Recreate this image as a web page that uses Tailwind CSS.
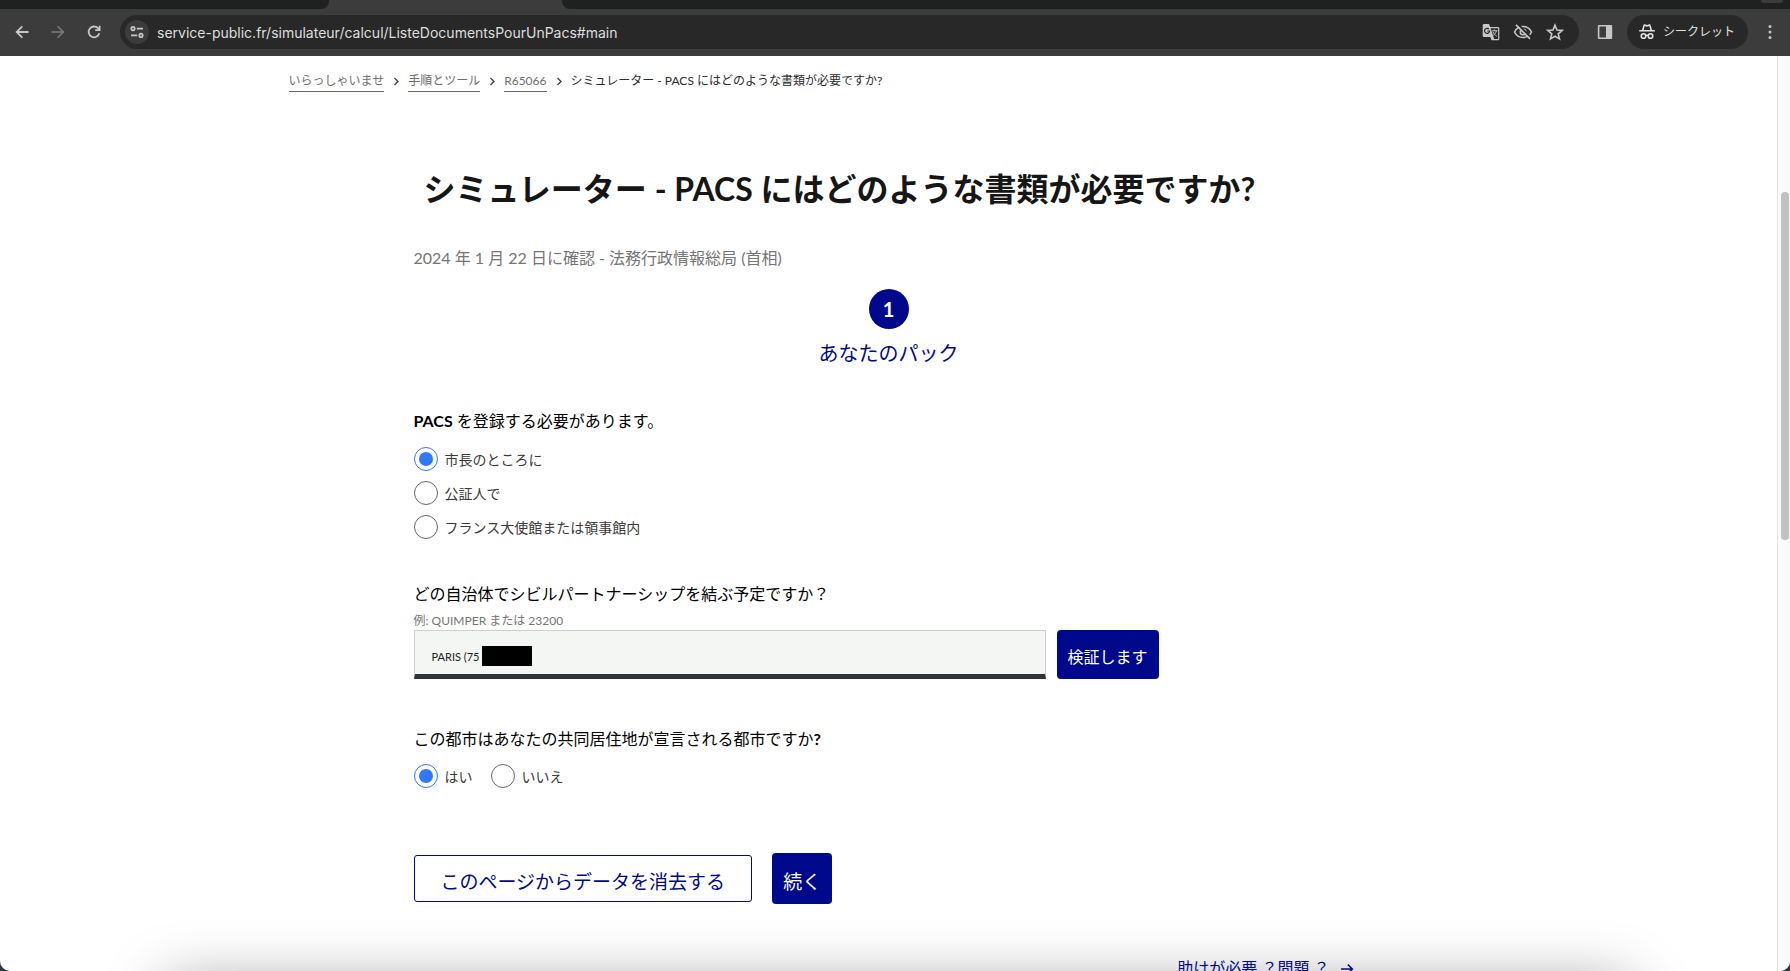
<!DOCTYPE html>
<html lang="ja">
<head>
<meta charset="utf-8">
<title>シミュレーター - PACS にはどのような書類が必要ですか?</title>
<script src="https://cdn.jsdelivr.net/npm/@tailwindcss/browser@4"></script>
</head>
<body class="h-screen overflow-hidden bg-[#2c3b42] font-['Lato','Noto_Sans_CJK_JP',sans-serif] text-black">
<div class="relative flex h-full flex-col overflow-hidden rounded-b-[10px] bg-white">

  <!-- Browser chrome -->
  <header class="shrink-0 bg-[#3c3c3c] font-['Inter','Noto_Sans_CJK_JP',sans-serif]">
    <div class="flex h-[9px] bg-[#3c3c3c]">
      <div class="w-[329px] rounded-br-[8px] bg-[#1f2120]"></div>
      <div class="w-[233px]"></div>
      <div class="flex flex-1 justify-end rounded-bl-[8px] bg-[#1f2120] pr-[7px]">
        <div class="h-[3px] w-[22px] rounded-b-full bg-[#3c3c3c]"></div>
      </div>
    </div>
    <div class="flex h-[47px] items-center pb-px text-[#c7c7c7]">
      <button type="button" aria-label="戻る" class="ml-3 flex size-5 items-center justify-center">
        <svg class="size-5" viewBox="0 0 20 20" fill="none" stroke="currentColor" stroke-width="1.8"><path d="M16.5 10H4.8M10.3 4.3 4.6 10l5.7 5.7"/></svg>
      </button>
      <button type="button" aria-label="進む" class="ml-4 flex size-5 items-center justify-center text-[#7d7d7d]">
        <svg class="size-5" viewBox="0 0 20 20" fill="none" stroke="currentColor" stroke-width="1.6"><path d="M3.5 10h11.7M9.7 4.3l5.7 5.7-5.7 5.7"/></svg>
      </button>
      <button type="button" aria-label="再読み込み" class="ml-4 flex size-5 items-center justify-center">
        <svg class="size-5" viewBox="0 0 20 20" fill="none" stroke="currentColor" stroke-width="1.8"><path d="M15.3 11.2A5.4 5.4 0 1 1 14 6.2l1.4 1.5"/><path d="M15.6 3.8v4.4h-4.4"/></svg>
      </button>
      <div class="ml-4 flex h-[34px] flex-1 items-center rounded-full bg-[#282828] pr-[14px]">
        <button type="button" aria-label="サイト情報" class="ml-[5px] flex size-6 items-center justify-center rounded-full bg-[#3c3c3c]">
          <svg class="size-4" viewBox="0 0 16 16" fill="none" stroke="currentColor" stroke-width="1.7"><circle cx="4" cy="4.6" r="1.7"/><path d="M7.8 4.6H14M2 11.4h6.2"/><circle cx="12" cy="11.4" r="1.7"/></svg>
        </button>
        <input aria-label="アドレス" value="service-public.fr/simulateur/calcul/ListeDocumentsPourUnPacs#main" class="ml-2 h-6 min-w-0 flex-1 bg-transparent text-[14px] text-[#dedede] outline-none">
        <button type="button" aria-label="翻訳" class="flex size-5 items-center justify-center">
          <svg class="size-5" viewBox="0 0 20 20"><path fill="currentColor" fill-rule="evenodd" d="M3 2h5l1.2 3H17a1.3 1.3 0 0 1 1.3 1.300V17a1.300 1.300 0 0 1-1.300 1.300h-6.500L9.300 15H3a1.300 1.300 0 0 1-1.300-1.300V3.300A1.300 1.300 0 0 1 3 2zM9.600 6.200l3.600 10.900h3.900V6.200z"/><path fill="none" stroke="#282828" stroke-width="1.2" d="M8 7.200A2.500 2.500 0 1 0 8.600 9H6.300"/><path fill="none" stroke="currentColor" stroke-width="1" d="M11 8.800h5.500M13.600 7.500v1.300M15.400 8.800c-.5 2-1.600 3.600-3.200 4.600M12 9.800c.8 1.900 2 3.200 3.800 4.400"/></svg>
        </button>
        <button type="button" aria-label="トラッキング防止" class="ml-3 flex size-5 items-center justify-center">
          <svg class="size-5" viewBox="0 0 20 20" fill="none" stroke="currentColor" stroke-width="1.600"><path d="M1.500 10C3.200 6.600 6.400 4.500 10 4.500s6.800 2.100 8.500 5.500c-1.700 3.400-4.900 5.500-8.500 5.500S3.200 13.400 1.500 10z"/><circle cx="10" cy="10" r="2.700"/><path stroke="#282828" stroke-width="2" d="M4.300 1.800 18 15.500"/><path d="M3 2.900l14 14"/></svg>
        </button>
        <button type="button" aria-label="ブックマーク" class="ml-3 flex size-5 items-center justify-center">
          <svg class="size-5" viewBox="0 0 20 20" fill="none" stroke="currentColor" stroke-width="1.600"><path d="m10 3.200 2 4.800 5.200.4-4 3.400 1.300 5.100L10 14.200l-4.500 2.700 1.300-5.100-4-3.400L8 8z"/></svg>
        </button>
      </div>
      <button type="button" aria-label="サイドパネル" class="ml-4 flex size-5 items-center justify-center">
        <svg class="size-4" viewBox="0 0 16 16"><path fill="currentColor" fill-rule="evenodd" d="M2 1h12a1.200 1.200 0 0 1 1.200 1.200v11.600A1.200 1.200 0 0 1 14 15H2a1.200 1.200 0 0 1-1.200-1.200V2.200A1.200 1.200 0 0 1 2 1zm.4 1.600v10.800H9V2.600z"/></svg>
      </button>
      <button type="button" class="ml-3 flex h-[34px] items-center gap-2 rounded-full bg-[#282828] pr-[13px] pl-3 text-[12px] text-[#e3e3e3]">
        <svg class="size-4" viewBox="0 0 16 16"><path fill="currentColor" fill-rule="evenodd" d="M4.500.8C4.700.3 5.200.1 5.600.3L8 1.100 10.400.3c.4-.2.9 0 1.100.5L13 6h2.800v1.600H.2V6H3zM5.700 2 4.700 6h6.600l-1-4L8 2.700z"/><g fill="none" stroke="currentColor" stroke-width="1.600"><circle cx="4.500" cy="12" r="2.300"/><circle cx="11.500" cy="12" r="2.300"/><path d="M6.800 11.700c.7-.5 1.700-.5 2.400 0"/></g></svg>
        <span>シークレット</span>
      </button>
      <button type="button" aria-label="メニュー" class="mr-[10px] ml-3 flex size-5 items-center justify-center">
        <svg class="size-5" viewBox="0 0 20 20" fill="currentColor"><circle cx="10" cy="4.500" r="1.500"/><circle cx="10" cy="10" r="1.500"/><circle cx="10" cy="15.500" r="1.500"/></svg>
      </button>
    </div>
  </header>

  <div class="flex min-h-0 flex-1">
    <div class="min-w-0 flex-1 overflow-hidden">
      <div class="mx-auto max-w-[1200px] pt-[15px]">
        <nav aria-label="パンくず" class="flex items-center text-[12px] leading-5 text-[#6e6e6e]">
          <a href="#" class="border-b border-[#666]">いらっしゃいませ</a>
          <svg class="mx-1 size-4" viewBox="0 0 16 16" fill="none" stroke="#444" stroke-width="1.400"><path d="m6.500 4 3.500 3.500L6.500 11"/></svg>
          <a href="#" class="border-b border-[#666]">手順とツール</a>
          <svg class="mx-1 size-4" viewBox="0 0 16 16" fill="none" stroke="#444" stroke-width="1.400"><path d="m6.500 4 3.500 3.500L6.500 11"/></svg>
          <a href="#" class="border-b border-[#666]">R65066</a>
          <svg class="mx-1 size-4" viewBox="0 0 16 16" fill="none" stroke="#444" stroke-width="1.400"><path d="m6.500 4 3.500 3.500L6.500 11"/></svg>
          <span class="border-b border-transparent text-[#2a2a2a]">シミュレーター - PACS にはどのような書類が必要ですか?</span>
        </nav>

        <main class="mx-auto flex max-w-[950px] flex-col">
          <h1 class="mt-[77px] mb-px pl-[10px] text-[32px] leading-10 font-bold text-[#161616]">シミュレーター - PACS にはどのような書類が必要ですか?</h1>
          <p class="mt-9 text-[16px] leading-6 text-[#757575]">2024 年 1 月 22 日に確認 - 法務行政情報総局 (首相)</p>

          <div class="mt-[19px] flex flex-col items-center text-[20px] text-[#000a8b]">
            <div class="flex size-10 items-center justify-center rounded-full bg-[#00098b] font-bold text-white">1</div>
            <div class="mt-[10px] leading-7">あなたのパック</div>
          </div>

          <form class="flex flex-col">
            <fieldset class="mt-[42px]">
              <legend class="text-[16px] leading-6"><b>PACS</b> を登録する必要があります。</legend>
              <div class="mt-[14px] flex flex-col gap-[10px] text-[14px] leading-6 text-[#3a3a3a]">
                <label class="flex items-center gap-[7px]"><input type="radio" name="lieu" checked class="size-6 appearance-none rounded-full border border-[#666] checked:border-[#2f78f6] checked:bg-[#2f78f6] checked:bg-clip-content checked:p-1"><span class="pt-px leading-[23px]">市長のところに</span></label>
                <label class="flex items-center gap-[7px]"><input type="radio" name="lieu" class="size-6 appearance-none rounded-full border border-[#666] checked:border-[#2f78f6] checked:bg-[#2f78f6] checked:bg-clip-content checked:p-1"><span class="pt-px leading-[23px]">公証人で</span></label>
                <label class="flex items-center gap-[7px]"><input type="radio" name="lieu" class="size-6 appearance-none rounded-full border border-[#666] checked:border-[#2f78f6] checked:bg-[#2f78f6] checked:bg-clip-content checked:p-1"><span class="pt-px leading-[23px]">フランス大使館または領事館内</span></label>
              </div>
            </fieldset>

            <label for="commune" class="mt-[43px] text-[16px] leading-6">どの自治体でシビルパートナーシップを結ぶ予定ですか？</label>
            <p id="hint" class="mt-[7px] text-[12px] leading-4 text-[#757575]">例: QUIMPER または 23200</p>
            <div class="mt-px flex gap-[11px]">
              <div class="relative w-[632px]">
                <input id="commune" aria-describedby="hint" value="PARIS (75" class="h-[49px] w-full border border-b-[5px] border-[#cfcfcf] border-b-[#2f343a] bg-[#f4f6f4] px-[17px] pt-2 text-[11px] text-[#222] outline-none">
                <div class="absolute top-4 left-[68px] h-5 w-[50px] bg-black"></div>
              </div>
              <button type="button" class="h-[49px] rounded-[4px] bg-[#00098b] px-[11px] pt-1 text-[16px] leading-6 text-white">検証します</button>
            </div>

            <fieldset class="mt-12">
              <legend class="text-[16px] leading-6">この都市はあなたの共同居住地が宣言される都市ですか<b>?</b></legend>
              <div class="mt-[13px] flex gap-[18px] text-[14px] leading-6 text-[#3a3a3a]">
                <label class="flex items-center gap-[7px]"><input type="radio" name="residence" checked class="size-6 appearance-none rounded-full border border-[#666] checked:border-[#2f78f6] checked:bg-[#2f78f6] checked:bg-clip-content checked:p-1"><span class="pt-px leading-[23px]">はい</span></label>
                <label class="flex items-center gap-[7px]"><input type="radio" name="residence" class="size-6 appearance-none rounded-full border border-[#666] checked:border-[#2f78f6] checked:bg-[#2f78f6] checked:bg-clip-content checked:p-1"><span class="pt-px leading-[23px]">いいえ</span></label>
              </div>
            </fieldset>

            <div class="mt-[65px] flex items-center gap-5 text-[19px] leading-7">
              <button type="reset" class="h-[47px] rounded-[3px] border border-[#00098b] px-[26px] pt-[6px] text-[#000a8b]">このページからデータを消去する</button>
              <button type="button" class="h-[51px] rounded-[4px] bg-[#00098b] px-[11px] pt-[6px] text-white">続く</button>
            </div>
          </form>

          <a href="#" class="relative z-10 mt-[52px] mr-[9px] flex items-center gap-[9px] self-end text-[16px] leading-6 text-[#000a8b]">
            <span>助けが必要 ？問題 ？</span>
            <svg class="size-4" viewBox="0 0 16 16" fill="none" stroke="currentColor" stroke-width="1.600"><path d="M2 9h11M8.800 4.500 13.300 9l-4.500 4.500"/></svg>
          </a>
        </main>
      </div>
    </div>

    <!-- Scrollbar -->
    <div class="flex w-[13px] flex-col items-center border-l border-[#e4e4e4] bg-[#fafafa] pt-[136px] pl-[2px]">
      <div class="h-[348px] w-2 rounded-full bg-[#c1c1c1]"></div>
    </div>
  </div>

  <!-- Shadow rising from the window below -->
  <div class="pointer-events-none absolute -bottom-[114px] left-[165px] right-[160px] h-[100px] shadow-[0_0_60px_rgba(0,0,0,0.4)]"></div>
</div>
</body>
</html>
